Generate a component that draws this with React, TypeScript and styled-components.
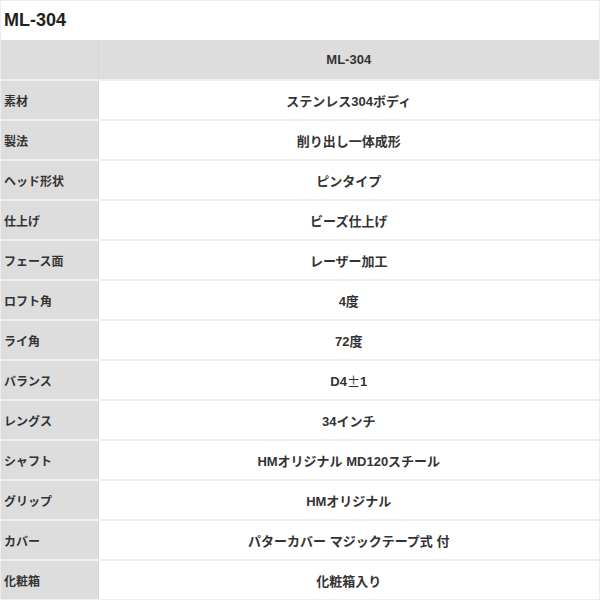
import React from "react";
import styled, { createGlobalStyle } from "styled-components";

const GlobalStyle = createGlobalStyle`
  html, body {
    margin: 0;
    padding: 0;
    background: #ffffff;
  }
  body {
    font-family: "Liberation Sans", "Noto Sans CJK JP", sans-serif;
    color: #333333;
  }
`;

interface SpecRow {
  label: string;
  value: React.ReactNode;
}

const specs: SpecRow[] = [
  { label: "素材", value: "ステンレス304ボディ" },
  { label: "製法", value: "削り出し一体成形" },
  { label: "ヘッド形状", value: "ピンタイプ" },
  { label: "仕上げ", value: "ビーズ仕上げ" },
  { label: "フェース面", value: "レーザー加工" },
  { label: "ロフト角", value: "4度" },
  { label: "ライ角", value: "72度" },
  {
    label: "バランス",
    value: (
      <>
        D4<Wide>±</Wide>1
      </>
    ),
  },
  { label: "レングス", value: "34インチ" },
  { label: "シャフト", value: "HMオリジナル MD120スチール" },
  { label: "グリップ", value: "HMオリジナル" },
  { label: "カバー", value: "パターカバー マジックテープ式 付" },
  { label: "化粧箱", value: "化粧箱入り" },
];

const App = () => {
  return (
    <>
      <GlobalStyle />
      <Page>
        <Title>ML-304</Title>
        <Table>
          <tbody>
            <Row>
              <LabelCell />
              <ValueCell $head>ML-304</ValueCell>
            </Row>
            {specs.map((spec) => (
              <Row key={spec.label}>
                <LabelCell>{spec.label}</LabelCell>
                <ValueCell>{spec.value}</ValueCell>
              </Row>
            ))}
          </tbody>
        </Table>
      </Page>
    </>
  );
};

export default App;

function Wide({ children }: { children: React.ReactNode }) {
  return <WideGlyph>{children}</WideGlyph>;
}

const WideGlyph = styled.span`
  font-family: "Noto Sans CJK JP", sans-serif;
  font-weight: 400;
`;

const Page = styled.div`
  width: 600px;
  height: 600px;
  box-sizing: border-box;
  border: 1px solid #ececec;
  border-bottom: none;
  overflow: hidden;
`;

const Title = styled.h1`
  margin: 0;
  height: 39px;
  display: flex;
  align-items: center;
  padding-left: 3px;
  font-size: 18px;
  font-weight: 700;
  color: #222222;
`;

const Table = styled.table`
  width: 100%;
  border-collapse: collapse;
  border-spacing: 0;
  table-layout: fixed;
`;

const Row = styled.tr`
  height: 40px;
  border-bottom: 2px solid #efefef;
`;

const LabelCell = styled.th`
  width: 97px;
  background: #dddddd;
  border-right: 1px solid #d6d6d6;
  text-align: left;
  padding: 0 0 0 3px;
  font-size: 12px;
  font-weight: 700;
  color: #333333;
  box-sizing: border-box;
`;

const ValueCell = styled.td<{ $head?: boolean }>`
  background: ${({ $head }) => ($head ? "#dddddd" : "#ffffff")};
  text-align: center;
  padding: 0;
  font-size: 13px;
  font-weight: 700;
  color: #333333;
`;
